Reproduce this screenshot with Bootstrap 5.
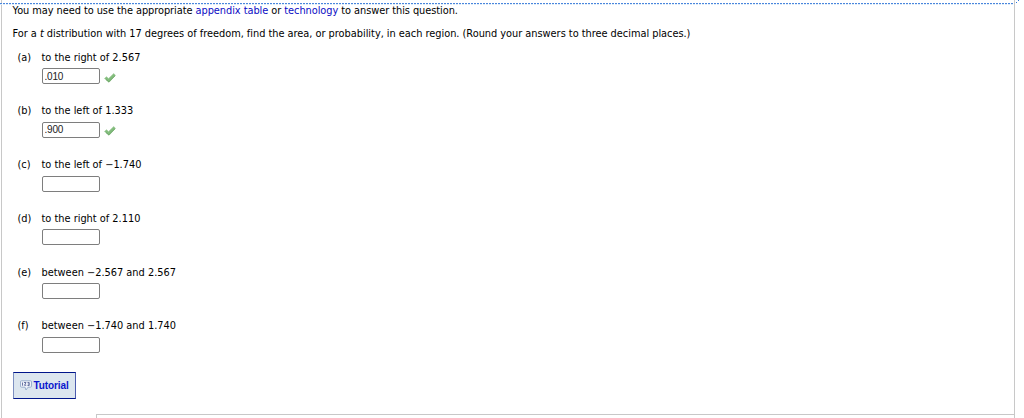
<!DOCTYPE html>
<html lang="en">
<head>
    <meta charset="UTF-8">
    <title>t distribution</title>
    <meta name="viewport" content="width=device-width, initial-scale=1">
    <link href="https://cdn.jsdelivr.net/npm/bootstrap@5.3.3/dist/css/bootstrap.min.css" rel="stylesheet">
    <style>
        body {
            font-family: Verdana, "DejaVu Sans", sans-serif;
            font-size: 9.8px;
            line-height: 14px;
            color: #000;
        }
        .page-wrap { height: 418px; }
        .dots {
            left: 0;
            top: 0;
        }
        .question {
            width: 1014px;
            height: 418px;
            margin-left: 1px;
            padding: 4px 0 0 10.5px;
            border-left: 1px solid #c8c8c8;
            border-right: 1px solid #c8c8c8;
        }
        .question a { color: #0b0bc4; }
        .intro {
            margin-bottom: 9px;
            white-space: nowrap;
            letter-spacing: -.02px;
        }
        .intro-first { letter-spacing: -.05px; }
        #parts { margin-top: .8px; }
        .part { height: 53.7px; padding-left: 5px; }
        .part-label { width: 24px; }
        .answer {
            width: 58px;
            height: 16px;
            margin-top: 3.5px;
            padding: 0 2px;
            border: 1px solid #7e7e7e;
            border-radius: 2px;
            font: 10px "Liberation Sans", Arial, sans-serif;
            letter-spacing: -.2px;
            color: #222;
        }
        .tick { margin: 8px 0 0 4px; }
        .tutorial {
            width: 63.5px;
            height: 27px;
            margin-top: -.8px;
            padding: 0 0 0 6px;
            gap: 2px;
            border: 1px solid #00158a;
            border-left-color: #7c8fc0;
            border-right-color: #4c5cad;
            border-radius: 0;
            background: #dce6ef;
            color: #0a17cd;
            font: bold 10px "Liberation Sans", Arial, sans-serif;
            letter-spacing: -.1px;
        }
        .next-box {
            height: 4px;
            margin-left: 83.5px;
            border-top: 1px solid #c8c8c8;
            border-left: 1px solid #c8c8c8;
        }
    </style>
</head>
<body class="bg-white overflow-hidden">

<div class="page-wrap position-relative">
    <svg class="dots position-absolute" width="1024" height="6">
        <path d="M0 3.5H1014" stroke="#4a86dc" stroke-dasharray="2 1"/>
        <path d="M0 4.5H1014" stroke="#dcebfa" stroke-dasharray="2 1"/>
        <path d="M1016 2h1v1h-1zM1018 0h1v1h-1z" fill="#2f75d6"/>
    </svg>

    <div class="question d-flex flex-column">
        <p class="intro intro-first">You may need to use the appropriate <a href="#" class="text-decoration-none">appendix table</a> or <a href="#" class="text-decoration-none">technology</a> to answer this question.</p>
        <p class="intro">For a <i>t</i> distribution with 17 degrees of freedom, find the area, or probability, in each region. (Round your answers to three decimal places.)</p>

        <div id="parts"></div>

        <button type="button" class="btn tutorial d-flex align-items-center">
            <svg width="12" height="11" viewBox="0 0 12 11">
                <path d="M1.5 .8h9q1 0 1 1v4.400q0 1-1 1H8L6 10 5 7.200H1.500q-1 0-1-1V1.800q0-1 1-1z" fill="#eef2f8" stroke="#94aacb" stroke-width=".9"/>
                <path d="M2.500 2.500v3.200M4 2.500H6L4.500 5.300h1.700M7.500 2.500h1.700v3H7.500M7.800 4h1.400" fill="none" stroke="#46548f" stroke-width=".8"/>
            </svg>
            <span>Tutorial</span>
        </button>

        <div class="next-box mt-auto"></div>
    </div>
</div>

<script>
    const parts = [
        { label: "(a)", text: "to the right of 2.567", value: ".010" },
        { label: "(b)", text: "to the left of 1.333", value: ".900" },
        { label: "(c)", text: "to the left of −1.740" },
        { label: "(d)", text: "to the right of 2.110" },
        { label: "(e)", text: "between −2.567 and 2.567" },
        { label: "(f)", text: "between −1.740 and 1.740" }
    ];

    // Green check shown next to graded answers
    const tick = `<svg class="tick" width="12" height="10" viewBox="0 0 12 10">
        <path d="M.5 5.500 2.400 3.700 4.600 5.500 9.700.6 11.500 2.300 5 9.300z" fill="#83bd7d" stroke="#a5cf9f" stroke-width=".7"/>
        <path d="M2 6.500 4.900 8.800 11 2.800" fill="none" stroke="#659f60" stroke-width=".8"/>
    </svg>`;

    document.getElementById("parts").innerHTML = parts.map(p => `
        <div class="part d-flex">
            <div class="part-label">${p.label}</div>
            <div>
                <div class="text-nowrap">${p.text}</div>
                <div class="d-flex">
                    <input type="text" class="answer d-block" value="${p.value || ""}">
                    ${p.value ? tick : ""}
                </div>
            </div>
        </div>`).join("");
</script>
<script src="https://cdn.jsdelivr.net/npm/bootstrap@5.3.3/dist/js/bootstrap.bundle.min.js"></script>
</body>
</html>
